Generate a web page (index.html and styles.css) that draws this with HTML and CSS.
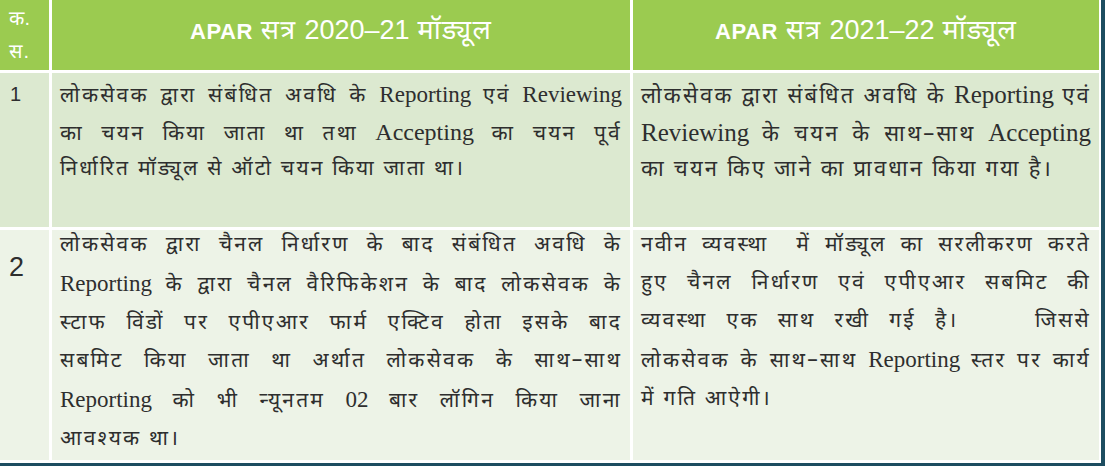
FILE: index.html
```html
<!DOCTYPE html>
<html lang="hi">
<head>
<meta charset="utf-8">
<link rel="stylesheet" href="styles.css">
</head>
<body>
<div class="frame">
  <div class="sheet">
    <div class="cell head num">क.<br>स.</div>
    <div class="cell head title"><span class="apar">APAR</span> सत्र <span class="dig">2020–21</span> मॉड्यूल</div>
    <div class="cell head title"><span class="apar">APAR</span> सत्र <span class="dig">2021–22</span> मॉड्यूल</div>

    <div class="cell r1 num n1">1</div>
    <div class="cell r1 text">
      <span class="ln">लोकसेवक द्वारा संबंधित अवधि के <span class="en">Reporting</span> एवं <span class="en">Reviewing</span></span>
      <span class="ln">का चयन किया जाता था तथा <span class="en big">Accepting</span> का चयन पूर्व</span>
      <span class="ln last">निर्धारित मॉड्यूल से ऑटो चयन किया जाता था।</span>
    </div>
    <div class="cell r1 text wide">
      <span class="ln">लोकसेवक द्वारा संबंधित अवधि के <span class="en xl">Reporting</span> एवं</span>
      <span class="ln"><span class="en xl">Reviewing</span> के चयन के साथ–साथ <span class="en xl">Accepting</span></span>
      <span class="ln last">का चयन किए जाने का प्रावधान किया गया है।</span>
    </div>

    <div class="cell r2 num n2">2</div>
    <div class="cell r2 text">
      <span class="ln">लोकसेवक द्वारा चैनल निर्धारण के बाद संबंधित अवधि के</span>
      <span class="ln"><span class="en">Reporting</span> के द्वारा चैनल वैरिफिकेशन के बाद लोकसेवक के</span>
      <span class="ln">स्टाफ विंडों पर एपीएआर फार्म एक्टिव होता इसके बाद</span>
      <span class="ln">सबमिट किया जाता था अर्थात लोकसेवक के साथ–साथ</span>
      <span class="ln"><span class="en">Reporting</span> को भी न्यूनतम <span class="en">02</span> बार लॉगिन किया जाना</span>
      <span class="ln last">आवश्यक था।</span>
    </div>
    <div class="cell r2 text">
      <span class="ln">नवीन व्यवस्था&nbsp; में मॉड्यूल का सरलीकरण करते</span>
      <span class="ln">हुए चैनल निर्धारण एवं एपीएआर सबमिट की</span>
      <span class="ln">व्यवस्था एक साथ रखी गई है।&nbsp;&nbsp;&nbsp; जिससे</span>
      <span class="ln">लोकसेवक के साथ–साथ <span class="en">Reporting</span> स्तर पर कार्य</span>
      <span class="ln last">में गति आऐगी।</span>
    </div>
  </div>
</div>
</body>
</html>
```
FILE: styles.css
```css
html, body {
  margin: 0;
  padding: 0;
  background: #ffffff;
}
.frame {
  width: 1105px;
  height: 466px;
  box-sizing: border-box;
  border-right: 4px solid #1d4d60;
  border-bottom: 3px solid #1d4d60;
  background: #ffffff;
  overflow: hidden;
}
.sheet {
  display: grid;
  grid-template-columns: 49px 578px 466px;
  grid-template-rows: 70px 154px 230px;
  column-gap: 3px;
  row-gap: 3px;
}
.cell {
  box-sizing: border-box;
  color: #2e2e2e;
}
.head {
  background: #9bcb50;
  color: #ffffff;
  font-family: "Liberation Sans", "Noto Sans Devanagari", Arial, sans-serif;
}
.head.num {
  font-size: 20px;
  line-height: 33px;
  padding: 2px 0 0 9px;
  letter-spacing: 0.5px;
}
.head.title {
  font-size: 27px;
  letter-spacing: 1.2px;
  display: flex;
  justify-content: center;
  align-items: baseline;
  column-gap: 8px;
  padding-top: 15px;
  line-height: 30px;
}
.apar {
  font-weight: bold;
  font-size: 22px;
  letter-spacing: 0.5px;
}
.dig {
  letter-spacing: 0;
}
.r1 { background: #dce9d0; }
.r2 { background: #edf3e7; }
.num {
  font-family: "Liberation Sans", Arial, sans-serif;
}
.n1 {
  font-size: 20px;
  padding: 10px 0 0 10px;
}
.n2 {
  font-size: 27px;
  padding: 22px 0 0 9px;
}
.text {
  font-family: "Noto Sans Devanagari", "Liberation Serif", serif;
  font-size: 21px;
  letter-spacing: 2.2px;
  padding: 4px 8px 0 8px;
}
.text.wide {
  font-size: 22px;
  letter-spacing: 2.2px;
}
.r2.text {
  padding-top: 0;
}
.en {
  font-family: "Liberation Serif", "Times New Roman", serif;
  letter-spacing: 0;
  font-size: 23px;
}
.en.big { font-size: 24px; }
.en.xl { font-size: 25px; }
.ln {
  display: block;
  line-height: 35px;
  white-space: nowrap;
  text-align: justify;
  text-align-last: justify;
}
.r2 .ln {
  line-height: 38px;
}
.r2 .ln:first-child {
  margin-top: -3px;
}
.ln.last {
  text-align-last: left;
}
```
